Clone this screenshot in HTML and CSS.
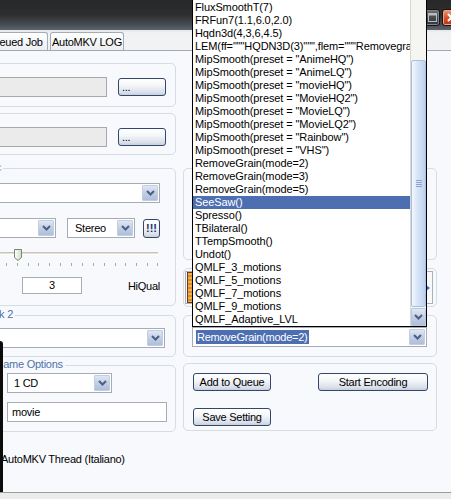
FILE: index.html
```html
<!DOCTYPE html>
<html>
<head>
<meta charset="utf-8">
<link rel="stylesheet" href="styles.css">
</head>
<body>
<div class="titlebar">
  <div class="cap-btns">
    <div class="cap cap-max"><svg width="9" height="9" viewBox="0 0 9 9"><rect x="0.5" y="0.5" width="8" height="8" fill="none" stroke="#b8bcc0"/><rect x="0.5" y="0.5" width="8" height="2" fill="#b8bcc0"/></svg></div>
    <div class="cap cap-close"><svg width="9" height="9" viewBox="0 0 9 9"><path d="M1 1 L8 8 M8 1 L1 8" stroke="#fff" stroke-width="2"/></svg></div>
  </div>
</div>
<div class="tabstrip">
  <div class="tab tab-queued">Queued Job</div>
  <div class="tab tab-log">AutoMKV LOG</div>
</div>
<div class="page">
  <div class="columns">
    <div class="col-left">
      <div class="group g1">
        <div class="row">
          <div class="textbox ro grow"></div>
          <div class="btn btn-dots">...</div>
        </div>
      </div>
      <div class="group g2">
        <div class="row">
          <div class="textbox ro grow"></div>
          <div class="btn btn-dots">...</div>
        </div>
      </div>
      <div class="group g3">
        <span class="glabel lbl-track1">Audio Codec</span>
        <div class="combo"><div class="combo-text"></div><div class="combo-arrow"><svg width="9" height="6" viewBox="0 0 9 6"><path d="M1 1 L4.5 4.5 L8 1" fill="none" stroke="#4d5f81" stroke-width="2"/></svg></div></div>
        <div class="row row-audio">
          <div class="combo grow"><div class="combo-text"></div><div class="combo-arrow"><svg width="9" height="6" viewBox="0 0 9 6"><path d="M1 1 L4.5 4.5 L8 1" fill="none" stroke="#4d5f81" stroke-width="2"/></svg></div></div>
          <div class="combo combo-stereo"><div class="combo-text">Stereo</div><div class="combo-arrow"><svg width="9" height="6" viewBox="0 0 9 6"><path d="M1 1 L4.5 4.5 L8 1" fill="none" stroke="#4d5f81" stroke-width="2"/></svg></div></div>
          <div class="btn btn-bang">!!!</div>
        </div>
        <svg class="slider" width="274" height="26" viewBox="0 0 274 26">
          <defs>
            <linearGradient id="thumbg" x1="0" y1="0" x2="1" y2="0">
              <stop offset="0" stop-color="#ffffff"/>
              <stop offset="1" stop-color="#cfdcc8"/>
            </linearGradient>
          </defs>
          <rect x="0" y="8" width="272" height="1" fill="#cbc5b8"/>
          <rect x="0" y="9" width="272" height="1" fill="#e4e0d8"/>
          <rect x="0" y="10" width="272" height="1" fill="#ffffff"/>
          <g fill="#a4a8ad">
            <rect x="120" y="19" width="1" height="3"/>
            <rect x="131" y="19" width="1" height="3"/>
            <rect x="142" y="19" width="1" height="3"/>
            <rect x="152" y="19" width="1" height="3"/>
            <rect x="163" y="19" width="1" height="3"/>
            <rect x="174" y="19" width="1" height="3"/>
            <rect x="185" y="19" width="1" height="3"/>
            <rect x="196" y="19" width="1" height="3"/>
            <rect x="207" y="19" width="1" height="3"/>
            <rect x="218" y="19" width="1" height="3"/>
            <rect x="229" y="19" width="1" height="3"/>
            <rect x="239" y="19" width="1" height="3"/>
            <rect x="250" y="19" width="1" height="3"/>
            <rect x="261" y="19" width="1" height="3"/>
            <rect x="271" y="19" width="1" height="3"/>
          </g>
          <path d="M128.5 5.5 H135.5 V13.5 L132 16.5 L128.5 13.5 Z" fill="url(#thumbg)" stroke="#72896b"/>
        </svg>
        <div class="row row-qual">
          <div class="textbox num">3</div>
          <div class="qual">HiQual</div>
        </div>
      </div>
      <div class="group g4">
        <span class="glabel lbl-track2">Audio Track 2</span>
        <div class="combo"><div class="combo-text"></div><div class="combo-arrow"><svg width="9" height="6" viewBox="0 0 9 6"><path d="M1 1 L4.5 4.5 L8 1" fill="none" stroke="#4d5f81" stroke-width="2"/></svg></div></div>
      </div>
      <div class="group g5">
        <span class="glabel lbl-name">File Name Options</span>
        <div class="combo combo-cd"><div class="combo-text">1 CD</div><div class="combo-arrow"><svg width="9" height="6" viewBox="0 0 9 6"><path d="M1 1 L4.5 4.5 L8 1" fill="none" stroke="#4d5f81" stroke-width="2"/></svg></div></div>
        <div class="textbox name">movie</div>
      </div>
    </div>
    <div class="col-right">
      <div class="group ra"></div>
      <div class="group rb">
        <div class="frame">
          <div class="thumbimg"></div>
          <div class="play"></div>
        </div>
      </div>
      <div class="group rc">
        <div class="combo combo-filter"><div class="combo-text"><span class="sel">RemoveGrain(mode=2)</span></div><div class="combo-arrow"><svg width="9" height="6" viewBox="0 0 9 6"><path d="M1 1 L4.5 4.5 L8 1" fill="none" stroke="#4d5f81" stroke-width="2"/></svg></div></div>
      </div>
      <div class="group rd">
        <div class="row row-between">
          <div class="btn btn-queue">Add to Queue</div>
          <div class="btn btn-start">Start Encoding</div>
        </div>
        <div class="btn btn-save">Save Setting</div>
      </div>
    </div>
  </div>
  <div class="footer-link">AutoMKV Thread (Italiano)</div>
</div>
<div class="statusbar"></div>
<div class="edge-dark"></div>
<div class="droplist">
  <div class="items">
    <div class="item">FluxSmoothST(7,7)</div>
    <div class="item">FluxSmoothT(7)</div>
    <div class="item">FRFun7(1.1,6.0,2.0)</div>
    <div class="item">Hqdn3d(4,3,6,4.5)</div>
    <div class="item">LEM(ff="""HQDN3D(3)""",flem="""Removegrain(mode=2)""")</div>
    <div class="item">MipSmooth(preset = "AnimeHQ")</div>
    <div class="item">MipSmooth(preset = "AnimeLQ")</div>
    <div class="item">MipSmooth(preset = "movieHQ")</div>
    <div class="item">MipSmooth(preset = "MovieHQ2")</div>
    <div class="item">MipSmooth(preset = "MovieLQ")</div>
    <div class="item">MipSmooth(preset = "MovieLQ2")</div>
    <div class="item">MipSmooth(preset = "Rainbow")</div>
    <div class="item">MipSmooth(preset = "VHS")</div>
    <div class="item">RemoveGrain(mode=2)</div>
    <div class="item">RemoveGrain(mode=3)</div>
    <div class="item">RemoveGrain(mode=5)</div>
    <div class="item selected">SeeSaw()</div>
    <div class="item">Spresso()</div>
    <div class="item">TBilateral()</div>
    <div class="item">TTempSmooth()</div>
    <div class="item">Undot()</div>
    <div class="item">QMLF_3_motions</div>
    <div class="item">QMLF_5_motions</div>
    <div class="item">QMLF_7_motions</div>
    <div class="item">QMLF_9_motions</div>
    <div class="item">QMLF_Adaptive_LVL</div>
  </div>
  <div class="vscroll">
    <div class="track"></div>
    <div class="sthumb"><div class="grip"></div></div>
    <div class="sdown"><svg width="9" height="6" viewBox="0 0 9 6"><path d="M1 1 L4.5 4.5 L8 1" fill="none" stroke="#4d5f81" stroke-width="2"/></svg></div>
  </div>
</div>
</body>
</html>
```
FILE: styles.css
```css
* { box-sizing: border-box; }

body {
  margin: 0;
  width: 451px;
  height: 499px;
  overflow: hidden;
  position: relative;
  font-family: "Liberation Sans", Arial, sans-serif;
  font-size: 11px;
  letter-spacing: -0.25px;
  color: #000;
  background: #f8f9fc;
}

.titlebar {
  height: 30px;
  background: linear-gradient(#282828 0%, #2d2e30 50%, #4a5057 85%, #5d646c 100%);
  display: flex;
  justify-content: flex-end;
  align-items: flex-start;
  padding-top: 9px;
  overflow: hidden;
}

.cap-btns {
  display: flex;
  gap: 2px;
  margin-right: -12px;
}

.cap {
  width: 21px;
  height: 17px;
  border-radius: 3px;
  border: 1px solid #151515;
  display: flex;
  align-items: center;
}

.cap-max {
  background: linear-gradient(#6c7177, #43474c 55%, #34373b);
  box-shadow: inset 0 0 0 1px #80858b;
  padding-left: 8px;
}

.cap-close {
  background: linear-gradient(#f09a78, #d9532c 50%, #bc3510);
  box-shadow: inset 0 0 0 1px #f2a585;
  padding-left: 4px;
}

.tabstrip {
  height: 20px;
  background: linear-gradient(#e3e6ea, #f1f2f4 3px);
  display: flex;
  align-items: flex-end;
}

.tab {
  height: 18px;
  border: 1px solid #a3abb5;
  border-bottom: none;
  border-radius: 3px 3px 0 0;
  background: linear-gradient(#ffffff, #eceef1);
  display: flex;
  align-items: center;
  justify-content: center;
  white-space: nowrap;
}

.tab-queued { margin-left: -20px; width: 68px; }
.tab-log { margin-left: 2px; width: 74px; }

.page {
  height: 442px;
  border-top: 1px solid #a0a8b2;
  background: #f8f9fc;
}

.columns {
  display: flex;
  gap: 7px;
  padding-top: 12px;
  margin-left: -124px;
}

.col-left { width: 300px; flex: none; }
.col-right { width: 254px; flex: none; margin-top: 105px; }

.group {
  border: 1px solid #d5dce3;
  border-radius: 5px;
  position: relative;
}

.glabel {
  position: absolute;
  top: -8px;
  line-height: 13px;
  padding: 0 2px;
  background: #f8f9fc;
  color: #4f72ac;
  white-space: nowrap;
}

.row { display: flex; align-items: center; }
.grow { flex: 1; }

.textbox {
  height: 20px;
  border: 1px solid #a7adb4;
  background: #fff;
  line-height: 18px;
  white-space: nowrap;
}

.textbox.ro { background: #ebebeb; border-color: #a8a8a8; }

.btn {
  height: 18px;
  border: 1px solid #34466a;
  border-radius: 3px;
  background: linear-gradient(#ffffff 0%, #f4f6f9 40%, #d9dfe9 85%, #c6cfdd 100%);
  display: flex;
  align-items: center;
  justify-content: center;
  white-space: nowrap;
  line-height: 16px;
}

.btn-dots { width: 48px; margin-left: 11px; justify-content: flex-start; padding-left: 3px; }

.combo {
  height: 20px;
  border: 1px solid #a5acb5;
  background: #fff;
  display: flex;
  padding: 1px;
}

.combo-text {
  flex: 1;
  padding-left: 3px;
  line-height: 16px;
  white-space: nowrap;
  overflow: hidden;
}

.combo-arrow {
  width: 16px;
  flex: none;
  border: 1px solid #c3cde0;
  border-radius: 1px;
  background: linear-gradient(#dfe7f4, #c2cfe6 50%, #aebfdc);
  display: flex;
  align-items: center;
  justify-content: center;
}

/* left column groups */
.g1 { height: 44px; padding: 13px 9px 0 8px; }
.g2 { height: 42px; margin-top: 6px; padding: 13px 9px 0 8px; }

.g3 { height: 138px; margin-top: 13px; padding: 14px 15px 0 9px; }
.lbl-track1 { left: 62px; color: #8fa0b8; }
.row-audio { margin-top: 15px; }
.combo-stereo { width: 68px; margin-left: 11px; }
.combo-stereo .combo-text { padding-left: 6px; }
.btn-bang { width: 17px; height: 19px; margin-left: 8px; color: #22306a; letter-spacing: 0; font-weight: bold; }
.slider { display: block; margin-top: 6px; }
.row-qual { margin-top: 7px; }
.textbox.num { width: 60px; height: 17px; line-height: 15px; margin-left: 136px; text-align: center; }
.qual { margin-left: auto; }

.g4 { height: 42px; margin-top: 9px; padding: 12px 10px 0 9px; }
.lbl-track2 { left: 70px; }

.g5 { height: 67px; margin-top: 8px; padding: 7px 0 0 130px; }
.lbl-name { left: 97px; }
.combo-cd { width: 105px; }
.combo-cd .combo-text { padding-left: 5px; }
.textbox.name { width: 160px; margin-top: 9px; padding-left: 4px; }

/* right column groups */
.ra { height: 92px; }

.rb { height: 39px; margin-top: 8px; padding: 2px 3px 0 1px; }
.frame {
  height: 33px;
  border: 1px solid #aab1ba;
  display: flex;
  align-items: center;
  justify-content: space-between;
}
.thumbimg {
  width: 10px;
  height: 31px;
  margin-left: 1px;
  border: 1px solid #6b3d12;
  background: repeating-linear-gradient(#f0b050 0 2px, #d98a2a 2px 4px);
}
.play {
  width: 0;
  height: 0;
  border-top: 3px solid transparent;
  border-bottom: 3px solid transparent;
  border-left: 4px solid #3a6cc0;
  margin-right: 2px;
}

.rc { height: 42px; margin-top: 8px; padding: 11px 9px 0 8px; }
.combo-filter .combo-text { padding-left: 2px; }
.sel { background: #4d6fb2; color: #fff; padding: 1px 1px; }

.rd { height: 68px; margin-top: 6px; padding: 9px 8px 0 9px; }
.row-between { justify-content: space-between; }
.btn-queue { width: 78px; }
.btn-start { width: 110px; }
.btn-save { width: 78px; margin-top: 17px; }

.footer-link {
  margin-top: 20px;
  padding-left: 1px;
  line-height: 14px;
}

.statusbar {
  height: 7px;
  border-top: 1px solid #9c9c9c;
  background: #ececec;
}

.edge-dark {
  position: absolute;
  left: 0;
  top: 341px;
  width: 3px;
  height: 151px;
  background: #0b0b0b;
  border-top-right-radius: 3px;
}

/* dropdown list overlay */
.droplist {
  position: absolute;
  left: 192px;
  top: -13px;
  width: 235px;
  height: 340px;
  border: 1px solid #000;
  background: #fff;
  display: flex;
}

.items {
  width: 217px;
  overflow: hidden;
  letter-spacing: -0.1px;
}

.item {
  height: 13px;
  line-height: 13px;
  padding-left: 2px;
  white-space: nowrap;
}

.item.selected { background: #4d6fb2; color: #fff; }

.vscroll {
  width: 16px;
  display: flex;
  flex-direction: column;
  background: #f5f5f2;
  border-left: 1px solid #d8d8d4;
}

.track { flex: 1; }

.sthumb {
  height: 247px;
  border: 1px solid #a9bfdf;
  border-radius: 2px;
  background: linear-gradient(to right, #f3f8fe, #d6e4f7 45%, #bfd2ee);
  display: flex;
  align-items: center;
  justify-content: center;
}

.grip {
  width: 6px;
  height: 7px;
  background: repeating-linear-gradient(#8ea6cc 0 1px, transparent 1px 2px);
}

.sdown {
  height: 18px;
  margin-top: 1px;
  border: 1px solid #bac7df;
  border-radius: 1px;
  background: linear-gradient(#dfe7f4, #c2cfe6 50%, #aebfdc);
  display: flex;
  align-items: center;
  justify-content: center;
}
```
